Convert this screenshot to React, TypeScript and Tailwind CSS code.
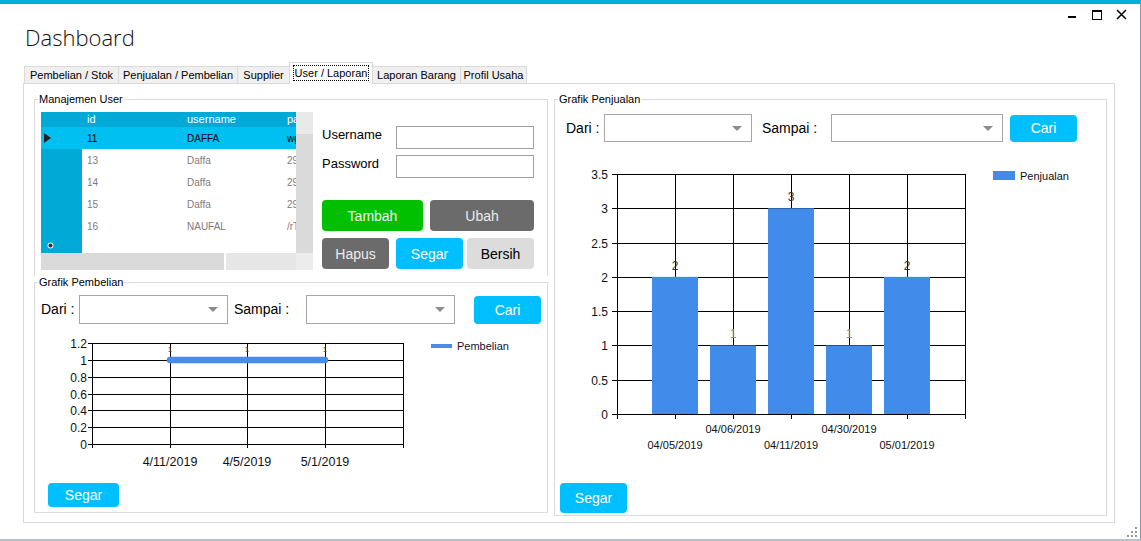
import React from "react";

const tabs = [
  { label: "Pembelian / Stok", w: "w-[95px]" },
  { label: "Penjualan / Pembelian", w: "w-[120px]" },
  { label: "Supplier", w: "w-[53px]" },
  { label: "User / Laporan", w: "w-[84px]", active: true },
  { label: "Laporan Barang", w: "w-[89px]" },
  { label: "Profil Usaha", w: "w-[67px]" },
];

const users = [
  { id: "11", username: "DAFFA", pass: "wg", selected: true },
  { id: "13", username: "Daffa", pass: "29" },
  { id: "14", username: "Daffa", pass: "29" },
  { id: "15", username: "Daffa", pass: "29" },
  { id: "16", username: "NAUFAL", pass: "/rT" },
];

const Combo = ({ size }: { size: string }) => (
  <div className={`${size} border border-[#a6a6a6] bg-white flex items-center justify-end pr-[9px]`}>
    <svg width="10" height="5" viewBox="0 0 10 5">
      <polygon points="0,0 10,0 5,5" fill="#8c8c8c" />
    </svg>
  </div>
);

const Btn = ({ label, cls }: { label: string; cls: string }) => (
  <div className={`${cls} rounded-[4px] flex items-center justify-center text-[14px] leading-none`}>
    {label}
  </div>
);

const DataGrid = () => (
  <div className="flex mt-[6px] ml-[6px]">
    <div className="w-[255px] h-[158px] flex flex-col text-[10px]">
      {/* header */}
      <div className="flex h-[15px] bg-[#00a9d6] text-white text-[11px] leading-[15px]">
        <div className="w-[41px]" />
        <div className="w-[100px] pl-[5px]">id</div>
        <div className="w-[100px] pl-[5px]">username</div>
        <div className="w-[14px] pl-[5px] overflow-hidden whitespace-nowrap">pa</div>
      </div>
      {users.map((u) =>
        u.selected ? (
          <div key={u.id} className="flex h-[22px] items-center bg-[#00c0f2] text-black">
            <div className="w-[41px] flex items-center pl-[3px]">
              <svg width="8" height="10" viewBox="0 0 8 10">
                <polygon points="0,0 7,5 0,10" fill="#222" />
              </svg>
            </div>
            <div className="w-[100px] pl-[5px]">{u.id}</div>
            <div className="w-[100px] pl-[5px]">{u.username}</div>
            <div className="w-[14px] pl-[5px] overflow-hidden whitespace-nowrap">{u.pass}</div>
          </div>
        ) : (
          <div key={u.id} className="flex h-[22px] items-center text-[#85797a]">
            <div className="w-[41px] h-full bg-[#00a9d6]" />
            <div className="w-[100px] pl-[5px]">{u.id}</div>
            <div className="w-[100px] pl-[5px]">{u.username}</div>
            <div className="w-[14px] pl-[5px] overflow-hidden whitespace-nowrap">{u.pass}</div>
          </div>
        )
      )}
      <div className="flex h-[16px]">
        <div className="w-[41px] h-full bg-[#00a9d6] flex items-center pl-[6px]">
          <svg width="7" height="7" viewBox="0 0 7 7">
            <circle cx="3.5" cy="3.5" r="3" fill="#e8e8e8" />
            <circle cx="3.5" cy="3.5" r="2" fill="#333" />
          </svg>
        </div>
      </div>
      {/* horizontal scrollbar */}
      <div className="flex h-[17px]">
        <div className="w-[183px] bg-[#dadada]" />
        <div className="w-[2px] bg-white" />
        <div className="flex-1 bg-[#e6e6e6]" />
      </div>
    </div>
    {/* vertical scrollbar */}
    <div className="w-[17px] h-[158px] flex flex-col">
      <div className="h-[22px] bg-[#e9e9e9]" />
      <div className="flex-1 bg-[#dadada]" />
      <div className="h-[17px] bg-[#ececec]" />
    </div>
  </div>
);

const UserForm = () => (
  <div className="ml-[9px] mt-[20px] w-[212px] text-[13px]">
    <div className="flex items-start">
      <span className="w-[74px] mt-[1px] leading-[15px]">Username</span>
      <div className="w-[138px] h-[23px] border border-[#a0a0a0] bg-white" />
    </div>
    <div className="flex items-start mt-[6px]">
      <span className="w-[74px] mt-[1px] leading-[15px]">Password</span>
      <div className="w-[138px] h-[23px] border border-[#a0a0a0] bg-white" />
    </div>
    <div className="flex gap-[7px] mt-[22px]">
      <Btn label="Tambah" cls="w-[101px] h-[31px] bg-[#00c000] text-[#f2f2f2]" />
      <Btn label="Ubah" cls="w-[104px] h-[31px] bg-[#6b6b6b] text-[#ececec]" />
    </div>
    <div className="flex mt-[7px]">
      <Btn label="Hapus" cls="w-[67px] h-[31px] bg-[#6b6b6b] text-[#ececec]" />
      <Btn label="Segar" cls="ml-[7px] w-[67px] h-[31px] bg-[#00bfff] text-white" />
      <Btn label="Bersih" cls="ml-[4px] w-[67px] h-[31px] bg-[#dcdcdc] text-black" />
    </div>
  </div>
);

const yTicksLine = [
  { v: "1.2", y: 343 },
  { v: "1", y: 360 },
  { v: "0.8", y: 377 },
  { v: "0.6", y: 394 },
  { v: "0.4", y: 410 },
  { v: "0.2", y: 427 },
  { v: "0", y: 444 },
];

const LineChart = () => (
  <svg
    width="500"
    height="140"
    viewBox="41 334 500 140"
    className="mt-[10px] ml-[6px] block"
    fontFamily="'Liberation Sans', Arial, sans-serif"
  >
    {yTicksLine.map((t) => (
      <g key={t.v}>
        <line x1="88" x2="403" y1={t.y + 0.5} y2={t.y + 0.5} stroke="#000" strokeWidth="1" />
        <text x="87" y={t.y + 4.5} fontSize="12" textAnchor="end" fill="#111">
          {t.v}
        </text>
      </g>
    ))}
    {[92, 170, 247, 325, 403].map((x) => (
      <line key={x} x1={x + 0.5} x2={x + 0.5} y1="343" y2="448" stroke="#000" strokeWidth="1" />
    ))}
    {[
      { x: 170, l: "4/11/2019" },
      { x: 247, l: "4/5/2019" },
      { x: 325, l: "5/1/2019" },
    ].map((d) => (
      <g key={d.l}>
        <text x={d.x} y="466" fontSize="12.5" textAnchor="middle" fill="#111">
          {d.l}
        </text>
        <text x={d.x} y="352" fontSize="8" textAnchor="middle" fill="#5a3a2a">
          1
        </text>
      </g>
    ))}
    <line x1="170" x2="325" y1="360" y2="360" stroke="#4a8de9" strokeWidth="6.5" strokeLinecap="round" />
    <line x1="431" x2="452" y1="346" y2="346" stroke="#4a8de9" strokeWidth="4" />
    <text x="457" y="350" fontSize="11" fill="#1a1030">
      Pembelian
    </text>
  </svg>
);

const yTicksBar = ["3.5", "3", "2.5", "2", "1.5", "1", "0.5", "0"].map((v, i) => ({
  v,
  y: 174 + (i * 240) / 7,
}));

const bars = [
  { c: 675, v: 2, l: "04/05/2019", row: 2 },
  { c: 733, v: 1, l: "04/06/2019", row: 1 },
  { c: 791, v: 3, l: "04/11/2019", row: 2 },
  { c: 849, v: 1, l: "04/30/2019", row: 1 },
  { c: 907, v: 2, l: "05/01/2019", row: 2 },
];

const BarChart = () => (
  <svg
    width="540"
    height="300"
    viewBox="560 160 540 300"
    className="mt-[18px] ml-[5px] block"
    fontFamily="'Liberation Sans', Arial, sans-serif"
  >
    {yTicksBar.map((t) => (
      <g key={t.v}>
        <line x1="612" x2="965" y1={Math.round(t.y) + 0.5} y2={Math.round(t.y) + 0.5} stroke="#000" strokeWidth="1" />
        <text x="608" y={Math.round(t.y) + 4.5} fontSize="12" textAnchor="end" fill="#111">
          {t.v}
        </text>
      </g>
    ))}
    {[617, 675, 733, 791, 849, 907, 965].map((x) => (
      <line key={x} x1={x + 0.5} x2={x + 0.5} y1="174" y2="419" stroke="#000" strokeWidth="1" />
    ))}
    {bars.map((b) => {
      const top = 414 - (b.v * 240) / 3.5;
      return (
        <g key={b.l}>
          <rect x={b.c - 23} y={top} width="46" height={414 - top} fill="#418bea" />
          <text
            x={b.c}
            y={top - 7}
            fontSize="12"
            textAnchor="middle"
            fill={b.v === 1 ? "#8a8a8a" : "#333"}
          >
            {b.v}
          </text>
          <text x={b.c} y={b.row === 1 ? 433 : 449} fontSize="11" textAnchor="middle" fill="#111">
            {b.l}
          </text>
        </g>
      );
    })}
    <line x1="617" x2="965" y1="414.5" y2="414.5" stroke="#000" strokeWidth="1" />
    <rect x="993" y="171" width="22" height="9" fill="#418bea" />
    <text x="1020" y="180" fontSize="11" fill="#111">
      Penjualan
    </text>
  </svg>
);

export default function App() {
  return (
    <div className="relative w-[1141px] h-[541px] bg-white border-t-4 border-t-[#00aedb] border-r border-r-[#8a99ad] border-b-2 border-b-[#b9c0ca] overflow-hidden font-['Liberation_Sans',Arial,sans-serif] text-black">
      {/* title bar */}
      <div className="flex justify-between h-[58px] pl-[25px] pr-[6px]">
        <div className="pt-[17px] leading-[32px] text-[22px] font-light font-['Open_Sans',sans-serif] text-[#111]">
          Dashboard
        </div>
        <svg width="74" height="18" viewBox="1060 6 74 18" className="mt-[2px]">
          <rect x="1068" y="16" width="8" height="2" fill="#000" />
          <rect x="1092.5" y="10.5" width="9" height="9" fill="none" stroke="#000" strokeWidth="1" />
          <rect x="1092" y="10" width="10" height="2" fill="#000" />
          <path d="M1117 10 L1126 19 M1126 10 L1117 19" stroke="#000" strokeWidth="1.5" />
        </svg>
      </div>

      {/* tabs */}
      <div className="flex items-end h-[21px] ml-[24px] text-[11px] relative z-10">
        {tabs.map((t) =>
          t.active ? (
            <div
              key={t.label}
              className={`${t.w} h-[22px] -mb-px -mr-px bg-white border-t border-l border-r border-[#d9d9d9] flex justify-center pt-[2px] whitespace-nowrap`}
            >
              <span className="border border-dotted border-black px-[1px] h-[16px] leading-[14px]">{t.label}</span>
            </div>
          ) : (
            <div
              key={t.label}
              className={`${t.w} h-[17px] bg-[#f0f0f0] border-t border-l border-r border-[#dadada] -mr-px flex items-center justify-center leading-none whitespace-nowrap`}
            >
              {t.label}
            </div>
          )
        )}
      </div>

      {/* tab panel */}
      <div className="ml-[23px] w-[1092px] h-[440px] border border-[#d9d9d9] flex gap-[6px] pl-[10px] pt-[9px]">
        {/* left column */}
        <div className="w-[514px] flex flex-col">
          <fieldset className="w-[514px] h-[183px] border-t border-l border-r border-[#dcdcdc]">
            <legend className="ml-[3px] px-[1px] text-[11px] leading-[13px]">Manajemen User</legend>
            <div className="flex">
              <DataGrid />
              <UserForm />
            </div>
          </fieldset>
          <fieldset className="w-[514px] h-[237px] border border-[#dcdcdc]">
            <legend className="ml-[3px] px-[1px] text-[11px] leading-[13px]">Grafik Pembelian</legend>
            <div className="flex items-center h-[29px] mt-[6px] ml-[6px] text-[14px]">
              <span className="w-[38px]">Dari :</span>
              <Combo size="w-[149px] h-[29px]" />
              <span className="w-[72px] ml-[6px]">Sampai :</span>
              <Combo size="w-[149px] h-[29px]" />
              <Btn label="Cari" cls="ml-[19px] w-[67px] h-[28px] bg-[#00bfff] text-white" />
            </div>
            <LineChart />
            <Btn label="Segar" cls="mt-[9px] ml-[13px] w-[71px] h-[24px] bg-[#00bfff] text-white" />
          </fieldset>
        </div>

        {/* right column */}
        <fieldset className="w-[553px] h-[423px] border border-[#dcdcdc]">
          <legend className="ml-[3px] px-[1px] text-[11px] leading-[13px]">Grafik Penjualan</legend>
          <div className="flex items-center h-[28px] mt-[8px] ml-[11px] text-[14px]">
            <span className="w-[38px]">Dari :</span>
            <Combo size="w-[148px] h-[28px]" />
            <span className="w-[69px] ml-[10px]">Sampai :</span>
            <Combo size="w-[172px] h-[28px]" />
            <Btn label="Cari" cls="ml-[7px] w-[67px] h-[27px] bg-[#00bfff] text-white" />
          </div>
          <BarChart />
          <Btn label="Segar" cls="mt-[23px] ml-[5px] w-[67px] h-[30px] bg-[#00bfff] text-white" />
        </fieldset>
      </div>

      {/* resize grip */}
      <svg width="11" height="11" viewBox="0 0 11 11" className="absolute right-[2px] bottom-[1px]">
        {[
          [8, 0],
          [8, 4],
          [4, 4],
          [8, 8],
          [4, 8],
          [0, 8],
        ].map(([x, y]) => (
          <rect key={`${x}-${y}`} x={x} y={y} width="2" height="2" fill="#9a9a9a" />
        ))}
      </svg>
    </div>
  );
}
